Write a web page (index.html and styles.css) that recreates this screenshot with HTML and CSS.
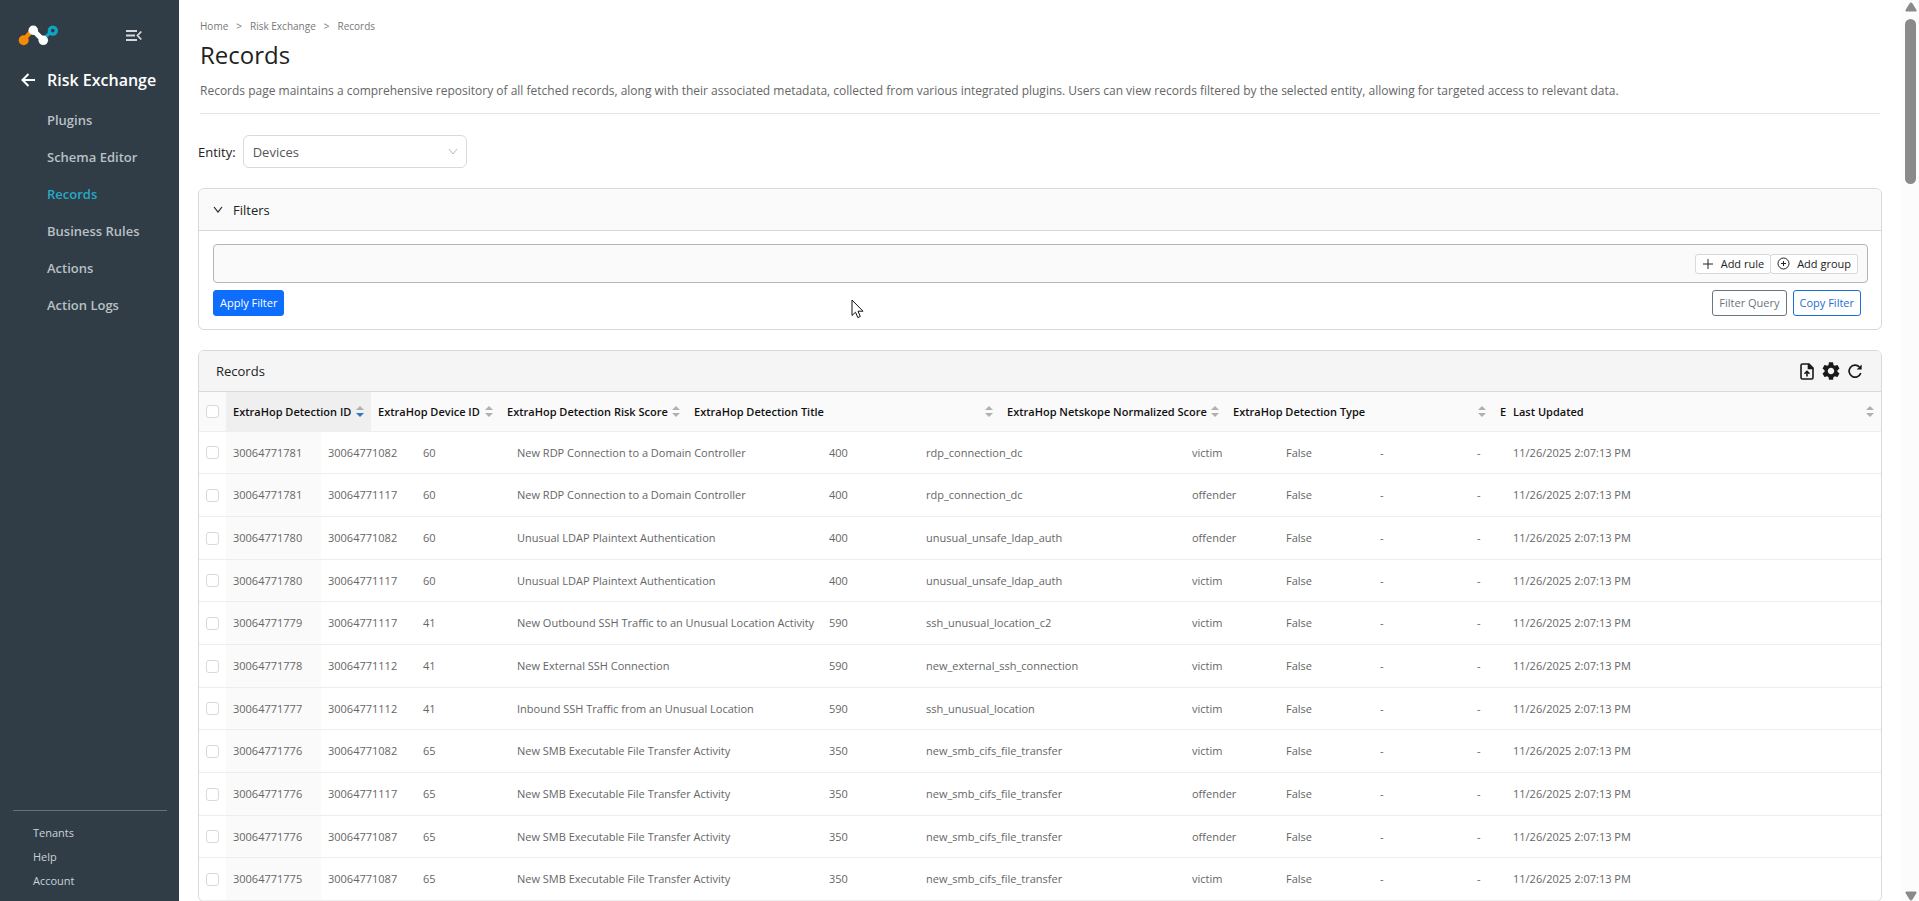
FILE: index.html
```html
<!DOCTYPE html>
<html lang="en">
<head>
  <meta charset="UTF-8" />
  <title>Records</title>
  <meta name="viewport" content="width=device-width, initial-scale=1.0" />
  <link rel="stylesheet" href="styles.css">
</head>
<body>
  <div class="app">
    <aside class="sidebar">
      <div class="sidebar-top">
        <a href="#" class="logo" aria-label="Home">
          <svg width="41" height="21" viewBox="0 0 42 22">
            <path d="M5 16 L14 6" stroke="#f58a07" stroke-width="4.500" />
            <circle cx="5.500" cy="16" r="5.200" fill="#f58a07" />
            <path d="M27 14 L35 6" stroke="#10a5c4" stroke-width="3.500" />
            <circle cx="36" cy="5.800" r="5.400" fill="#10a5c4" />
            <circle cx="36" cy="5.800" r="2" fill="#303c46" />
            <path d="M15.500 5.500 L26 16" stroke="#fff" stroke-width="5.500" />
            <circle cx="15.500" cy="5.500" r="5" fill="#fff" />
            <circle cx="26" cy="16" r="5" fill="#fff" />
          </svg>
        </a>
        <button type="button" class="icon-btn" aria-label="Collapse menu">
          <svg width="16" height="11" viewBox="0 0 16 11" fill="none" stroke="#d5d9dc" stroke-width="1.800">
            <path d="M0 1h11M0 5.500h9M0 10h11M15.300 1.500 L11.500 5.500 L15.300 9.500" />
          </svg>
        </button>
      </div>
      <a href="#" class="back">
        <svg width="14" height="14" viewBox="0 0 14 14" fill="none" stroke="#fff" stroke-width="2">
          <path d="M14 7H1.500M7.500 1 L1.500 7 L7.500 13" />
        </svg>
        <span>Risk Exchange</span>
      </a>
      <nav class="menu">
        <a href="#">Plugins</a>
        <a href="#">Schema Editor</a>
        <a href="#" class="active">Records</a>
        <a href="#">Business Rules</a>
        <a href="#">Actions</a>
        <a href="#">Action Logs</a>
      </nav>
      <nav class="menu-bottom">
        <a href="#">Tenants</a>
        <a href="#">Help</a>
        <a href="#">Account</a>
      </nav>
    </aside>

    <main class="content">
      <header class="page-header">
        <nav class="breadcrumb">
          <a href="#">Home</a><span>&gt;</span><a href="#">Risk Exchange</a><span>&gt;</span><a href="#">Records</a>
        </nav>
        <h1>Records</h1>
        <p>Records page maintains a comprehensive repository of all fetched records, along with their associated metadata, collected from various integrated plugins. Users can view records filtered by the selected entity, allowing for targeted access to relevant data.</p>
      </header>

      <div class="entity">
        <label for="entity">Entity:</label>
        <div class="select-wrap">
          <select id="entity">
            <option>Devices</option>
          </select>
          <svg class="select-arrow" width="10" height="7" viewBox="0 0 10 7" fill="none" stroke="#bbb"><path d="M1 1l4 5 4-5" /></svg>
        </div>
      </div>

      <section class="card filters">
        <button type="button" class="card-toggle">
          <svg width="10" height="7" viewBox="0 0 10 7" fill="none" stroke="#222" stroke-width="1.200"><path d="M1 1l4 5 4-5" /></svg>
          Filters
        </button>
        <div class="filters-body">
          <div class="query-box">
            <div class="query-actions">
              <button type="button">
                <svg width="12" height="12" viewBox="0 0 12 12" fill="none" stroke="#222"><path d="M6 1v10M1 6h10" /></svg>
                Add rule
              </button>
              <button type="button">
                <svg width="13" height="13" viewBox="0 0 13 13" fill="none" stroke="#222"><circle cx="6.500" cy="6.500" r="5.500" /><path d="M6.500 4v5M4 6.500h5" /></svg>
                Add group
              </button>
            </div>
          </div>
          <div class="filter-buttons">
            <button type="button" class="btn btn-primary">Apply Filter</button>
            <button type="button" class="btn btn-muted">Filter Query</button>
            <button type="button" class="btn btn-outline">Copy Filter</button>
          </div>
        </div>
      </section>

      <section class="card records">
        <div class="records-head">
          <h2>Records</h2>
          <div class="records-tools">
            <button type="button" class="icon-btn" aria-label="Export">
              <svg width="14" height="17" viewBox="0 0 14 17" fill="none" stroke="#1a1a1a" stroke-width="1.600"><path d="M1 2.500Q1 1 2.500 1H9L13 5V14.500Q13 16 11.500 16H2.500Q1 16 1 14.500Z" /><path d="M8.500 1V5.500H13" fill="#1a1a1a" /><path d="M7 13.500V8.500M4.500 10.800L7 8.300L9.500 10.800" /></svg>
            </button>
            <button type="button" class="icon-btn" aria-label="Settings">
              <svg width="18" height="18" viewBox="0 0 24 24" fill="#1a1a1a"><path transform="translate(-2.400 -2.400) scale(1.200)" d="M19.140 12.940c.04-.3.06-.61.06-.94 0-.32-.02-.64-.07-.94l2.030-1.580a.49.49 0 0 0 .12-.61l-1.920-3.320a.488.488 0 0 0-.59-.22l-2.390.96c-.5-.38-1.030-.7-1.620-.94l-.36-2.540a.484.484 0 0 0-.48-.41h-3.840c-.24 0-.43.17-.47.41l-.36 2.540c-.59.24-1.130.57-1.620.94l-2.390-.96c-.22-.08-.47 0-.59.22L2.740 8.870c-.12.210-.08.470.12.610l2.030 1.580c-.05.3-.09.630-.09.940s.02.640.07.940l-2.030 1.580a.49.49 0 0 0-.12.610l1.920 3.320c.12.220.37.290.59.220l2.390-.96c.5.380 1.030.7 1.620.940l.36 2.540c.05.240.240.410.480.410h3.840c.24 0 .44-.17.470-.41l.36-2.540c.59-.24 1.130-.56 1.620-.94l2.390.96c.22.080.470 0 .59-.22l1.920-3.320c.12-.22.070-.47-.12-.61zM12 15.600c-1.980 0-3.600-1.620-3.600-3.600s1.620-3.600 3.600-3.600 3.600 1.620 3.600 3.600-1.620 3.600-3.600 3.600" /></svg>
            </button>
            <button type="button" class="icon-btn" aria-label="Refresh">
              <svg width="14" height="14" viewBox="0 0 14 14" fill="none" stroke="#1a1a1a" stroke-width="1.700"><path d="M12.800 9A6 6 0 1 1 11.500 3" /><path d="M13.700 0.500V5.500H8.700Z" fill="#1a1a1a" stroke="none" /></svg>
            </button>
          </div>
        </div>

        <table class="grid grid-head">
          <colgroup>
            <col class="w-check"><col class="h1"><col class="h2"><col class="h3"><col class="h4"><col class="h5"><col class="h6"><col class="h7"><col>
          </colgroup>
          <thead>
            <tr>
              <th><input type="checkbox" aria-label="Select all"></th>
              <th class="sorted"><div>ExtraHop Detection ID<i class="sorter desc"></i></div></th>
              <th><div>ExtraHop Device ID<i class="sorter"></i></div></th>
              <th><div>ExtraHop Detection Risk Score<i class="sorter"></i></div></th>
              <th><div>ExtraHop Detection Title<i class="sorter"></i></div></th>
              <th><div>ExtraHop Netskope Normalized Score<i class="sorter"></i></div></th>
              <th><div>ExtraHop Detection Type<i class="sorter"></i></div></th>
              <th><div>E</div></th>
              <th><div>Last Updated<i class="sorter"></i></div></th>
            </tr>
          </thead>
        </table>

        <table class="grid grid-body">
          <colgroup>
            <col class="w-check"><col class="b1"><col class="b2"><col class="b3"><col class="b4"><col class="b5"><col class="b6"><col class="b7"><col class="b8"><col class="b9"><col class="b10"><col>
          </colgroup>
          <tbody id="rows"></tbody>
        </table>
      </section>
    </main>

    <div class="scrollbar">
      <svg width="12" height="10" viewBox="0 0 12 10" fill="#8a8a8a"><path d="M6 0.500Q7 0.500 7.500 1.500L11.500 8Q12 9.500 10.500 9.500H1.500Q0 9.500 .5 8L4.500 1.500Q5 .5 6 .5Z" /></svg>
      <div class="thumb"></div>
      <svg class="down" width="12" height="10" viewBox="0 0 12 10" fill="#8a8a8a"><path d="M6 9.500Q7 9.500 7.500 8.500L11.500 2Q12 .5 10.500 .5H1.500Q0 .5 .5 2L4.500 8.500Q5 9.500 6 9.500Z" /></svg>
    </div>
  </div>

  <svg class="cursor" width="13" height="20" viewBox="0 0 13 20"><path d="M1 1V16.500L4.500 13.200L6.800 18.600L9.300 17.500L7 12.200H12Z" fill="#fff" stroke="#111" /></svg>

  <script src="script.js"></script>
</body>
</html>
```

FILE: styles.css
```css
:root {
  --side: #303c46;
  --border: #d9d9d9;
  --text: #222;
  --muted: #666;
  --blue: #0d6efd;
}

* {
  box-sizing: border-box;
}

body {
  margin: 0;
  font-family: "Open Sans", "Noto Sans", sans-serif;
  font-size: 12px;
  line-height: 18px;
  color: var(--text);
  background: #fff;
}

a {
  color: inherit;
  text-decoration: none;
}

button, select {
  font: inherit;
  color: inherit;
  cursor: pointer;
}

svg {
  display: block;
  flex: none;
}

.app {
  display: flex;
  height: 100vh;
  overflow: hidden;
}

/* Sidebar */
.sidebar {
  display: flex;
  flex-direction: column;
  flex: none;
  width: 179px;
  padding-bottom: 11px;
  background: var(--side);
  color: #b9c0c6;
}

.sidebar-top {
  display: flex;
  align-items: center;
  justify-content: space-between;
  padding: 25px 37px 0 18px;
}

.icon-btn {
  padding: 0;
  border: none;
  background: none;
}

.back {
  display: flex;
  align-items: center;
  gap: 12px;
  margin: 22px 0 0 21px;
  color: #fff;
  font-size: 16px;
  line-height: 24px;
  font-weight: 600;
}

.menu {
  display: flex;
  flex-direction: column;
  margin-top: 19px;
  padding-left: 47px;
  font-size: 13px;
  font-weight: 600;
  gap: 19px;
}

.menu .active {
  color: #25a9c6;
}

.menu-bottom {
  display: flex;
  flex-direction: column;
  gap: 6px;
  margin: auto 12px 0 13px;
  padding: 13px 0 0 20px;
  border-top: 1px solid #66727b;
  color: #cbd2d7;
  font-size: 11px;
  font-weight: 500;
}

/* Content */
.content {
  flex: 1;
  min-width: 0;
  padding: 17px 20px 0 19px;
  overflow: hidden;
}

.page-header {
  margin: 0 2px;
  padding-bottom: 13px;
  border-bottom: 1px solid #e4e4e4;
}

.breadcrumb {
  display: flex;
  gap: 8px;
  font-size: 10px;
  color: #777;
}

h1 {
  margin: 4px 0;
  font-size: 24px;
  line-height: 32px;
  font-weight: 400;
}

.page-header p {
  margin: 11px 0 0;
  color: var(--muted);
}

.entity {
  display: flex;
  align-items: center;
  gap: 7px;
  margin-top: 21px;
  font-size: 13px;
}

.select-wrap {
  position: relative;
}

.select-wrap select {
  display: block;
  width: 224px;
  height: 33px;
  padding: 0 9px;
  appearance: none;
  border: 1px solid var(--border);
  border-radius: 6px;
  background: #fff;
  color: #555;
}

.select-arrow {
  position: absolute;
  top: 13px;
  right: 9px;
  pointer-events: none;
}

.card {
  border: 1px solid var(--border);
  border-radius: 6px;
  overflow: hidden;
}

/* Filters */
.filters {
  margin-top: 20px;
}

.card-toggle {
  display: flex;
  align-items: center;
  gap: 10px;
  width: 100%;
  height: 42px;
  padding: 0 14px;
  border: none;
  border-bottom: 1px solid var(--border);
  background: #fafafa;
  font-size: 13px;
  font-weight: 500;
}

.filters-body {
  padding: 13px 13px 13px 14px;
}

.query-box {
  display: flex;
  align-items: center;
  justify-content: flex-end;
  height: 39px;
  padding: 0 9px;
  border: 1px solid #b5b5b5;
  border-radius: 4px;
  background: #fafafa;
}

.query-actions {
  display: flex;
}

.query-actions button {
  display: flex;
  align-items: center;
  gap: 7px;
  height: 20px;
  padding: 0 6px;
  border: 1px solid var(--border);
  border-radius: 3px;
  background: #fff;
  font-size: 11px;
}

.query-actions button + button {
  margin-left: -1px;
}

.filter-buttons {
  display: flex;
  gap: 6px;
  padding: 7px 7px 0 0;
}

.btn {
  height: 26px;
  padding: 0 6px;
  border: 1px solid;
  border-radius: 3px;
  background: #fff;
  font-size: 11px;
}

.btn-primary {
  margin-right: auto;
  border-color: var(--blue);
  background: var(--blue);
  color: #fff;
  font-weight: 500;
}

.btn-muted {
  color: #6c757d;
}

.btn-outline {
  color: #1a6ed8;
}

/* Records */
.records {
  margin-top: 20px;
}

.records-head {
  display: flex;
  align-items: center;
  justify-content: space-between;
  height: 41px;
  padding: 0 19px 0 17px;
  border-bottom: 1px solid var(--border);
  background: #f5f5f5;
}

h2 {
  margin: 0;
  font-size: 13px;
  font-weight: 500;
}

.records-tools {
  display: flex;
  align-items: center;
  gap: 8px;
}

.grid {
  width: 100%;
  table-layout: fixed;
  border-collapse: separate;
  border-spacing: 0;
  font-size: 11px;
}

.grid th, .grid td {
  padding: 0 7px;
  border-bottom: 1px solid #eee;
  text-align: left;
  white-space: nowrap;
}

.grid th {
  height: 40px;
  background: #fafafa;
  color: #111;
  font-weight: 600;
}

.grid th.sorted {
  background: #efefef;
}

.grid th div {
  display: flex;
  align-items: center;
  justify-content: space-between;
}

.grid td {
  height: 43px;
  color: var(--muted);
}

.grid tr:nth-child(3n + 1) td {
  height: 42px;
}

.grid td.sorted {
  background: #fafafa;
}

.grid input {
  display: block;
  width: 13px;
  height: 13px;
  margin: 0;
  appearance: none;
  border: 1px solid var(--border);
  border-radius: 3px;
  background: #fff;
}

.sorter {
  display: flex;
  flex-direction: column;
  gap: 3px;
  flex: none;
}

.sorter::before, .sorter::after {
  content: "";
  border: 4px solid transparent;
}

.sorter::before {
  border-top: none;
  border-bottom-color: #b0b0b0;
}

.sorter::after {
  border-bottom: none;
  border-top-color: #b0b0b0;
}

.sorter.desc::after {
  border-top-color: #3574c4;
}

.w-check { width: 27px; }

.h1 { width: 145px; }
.h2 { width: 129px; }
.h3 { width: 187px; }
.h4 { width: 313px; }
.h5 { width: 226px; }
.h6 { width: 267px; }
.h7 { width: 13px; }

.b1, .b2 { width: 95px; }
.b3 { width: 94px; }
.b4 { width: 312px; }
.b5 { width: 97px; }
.b6 { width: 266px; }
.b7 { width: 94px; }
.b8 { width: 94px; }
.b9 { width: 97px; }
.b10 { width: 36px; }

/* Scrollbar */
.scrollbar {
  display: flex;
  flex-direction: column;
  align-items: center;
  flex: none;
  width: 17px;
  padding-top: 2px;
  background: #fcfcfc;
}

.thumb {
  width: 11px;
  height: 165px;
  margin-top: 7px;
  border-radius: 6px;
  background: #8a8a8a;
}

.scrollbar .down {
  margin-top: auto;
}

.cursor {
  position: absolute;
  left: 851px;
  top: 299px;
}
```

FILE: script.js
```js
const UPDATED = "11/26/2025 2:07:13 PM";

const records = [
  ["30064771781", "30064771082", "60", "New RDP Connection to a Domain Controller", "400", "rdp_connection_dc", "victim"],
  ["30064771781", "30064771117", "60", "New RDP Connection to a Domain Controller", "400", "rdp_connection_dc", "offender"],
  ["30064771780", "30064771082", "60", "Unusual LDAP Plaintext Authentication", "400", "unusual_unsafe_ldap_auth", "offender"],
  ["30064771780", "30064771117", "60", "Unusual LDAP Plaintext Authentication", "400", "unusual_unsafe_ldap_auth", "victim"],
  ["30064771779", "30064771117", "41", "New Outbound SSH Traffic to an Unusual Location Activity", "590", "ssh_unusual_location_c2", "victim"],
  ["30064771778", "30064771112", "41", "New External SSH Connection", "590", "new_external_ssh_connection", "victim"],
  ["30064771777", "30064771112", "41", "Inbound SSH Traffic from an Unusual Location", "590", "ssh_unusual_location", "victim"],
  ["30064771776", "30064771082", "65", "New SMB Executable File Transfer Activity", "350", "new_smb_cifs_file_transfer", "victim"],
  ["30064771776", "30064771117", "65", "New SMB Executable File Transfer Activity", "350", "new_smb_cifs_file_transfer", "offender"],
  ["30064771776", "30064771087", "65", "New SMB Executable File Transfer Activity", "350", "new_smb_cifs_file_transfer", "offender"],
  ["30064771775", "30064771087", "65", "New SMB Executable File Transfer Activity", "350", "new_smb_cifs_file_transfer", "victim"]
];

document.getElementById("rows").innerHTML = records.map(record => {
  const cells = [...record, "False", "-", "-", UPDATED];
  return `<tr>
    <td><input type="checkbox" aria-label="Select ${record[0]}"></td>
    ${cells.map((cell, i) => `<td${i === 0 ? ' class="sorted"' : ""}>${cell}</td>`).join("")}
  </tr>`;
}).join("");
```
